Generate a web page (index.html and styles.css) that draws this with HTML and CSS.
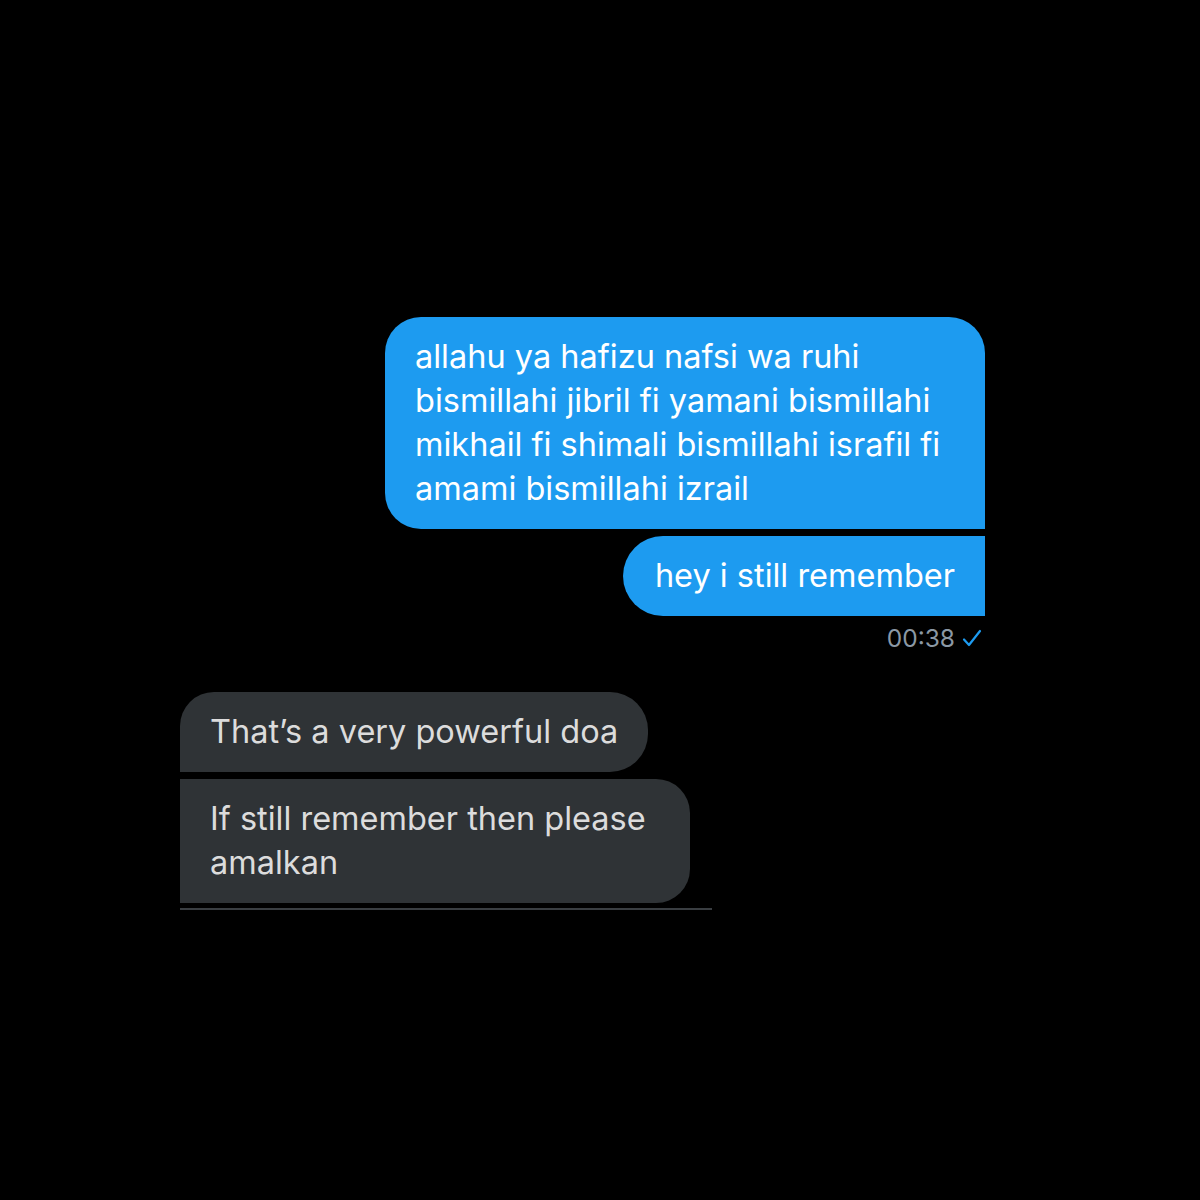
FILE: index.html
```html
<!DOCTYPE html>
<html lang="en">
<head>
  <meta charset="UTF-8">
  <meta name="viewport" content="width=device-width, initial-scale=1.0">
  <title>Messages</title>
  <link rel="stylesheet" href="styles.css">
</head>
<body>
  <div class="chat">
    <div class="group sent">
      <div class="bubble first">allahu ya hafizu nafsi wa ruhi bismillahi jibril fi yamani bismillahi mikhail fi shimali bismillahi israfil fi amami bismillahi izrail</div>
      <div class="bubble last">hey i still remember</div>
      <div class="meta">00:38
        <svg class="check" viewBox="0 0 20 20" width="20" height="20"><path d="M2 11.5 L7 17 L18 3" fill="none" stroke="#1d9bf0" stroke-width="2.2" stroke-linecap="round" stroke-linejoin="round"/></svg>
      </div>
    </div>

    <div class="group received">
      <div class="bubble first">That’s a very powerful doa</div>
      <div class="bubble last">If still remember then please amalkan</div>
      <div class="divider"></div>
    </div>
  </div>
</body>
</html>
```

FILE: styles.css
```css
body {
  margin: 0;
  background: #000;
  font-family: Inter, "Noto Sans", sans-serif;
  height: 1200px;
}
.chat {
  width: 805px;
  margin-left: 180px;
  padding-top: 317px;
}
.group {
  display: flex;
  flex-direction: column;
  gap: 7px;
}
.sent {
  align-items: flex-end;
}
.received {
  align-items: flex-start;
  margin-top: 39px;
}
.bubble {
  font-size: 32.5px;
  line-height: 44px;
  padding: 18px 30px;
  box-sizing: content-box;
}
.sent .bubble {
  max-width: 540px;
  background: #1d9bf0;
  color: #fff;
}
.sent .first {
  border-radius: 36px 36px 0 36px;
}
.sent .last {
  padding-left: 32px;
  border-radius: 40px 0 0 40px;
}
.received .bubble {
  max-width: 450px;
  background: #2f3336;
  color: #dcdcdc;
}
.received .first {
  border-radius: 34px 38px 38px 0;
}
.received .last {
  border-radius: 0 34px 34px 0;
}
.meta {
  display: flex;
  align-items: center;
  gap: 7px;
  margin-top: 0;
  margin-right: 3px;
  font-size: 24.5px;
  color: #8b98a5;
}
.divider {
  width: 532px;
  height: 2px;
  background: #3a3e42;
  margin-top: -2px;
}
```
